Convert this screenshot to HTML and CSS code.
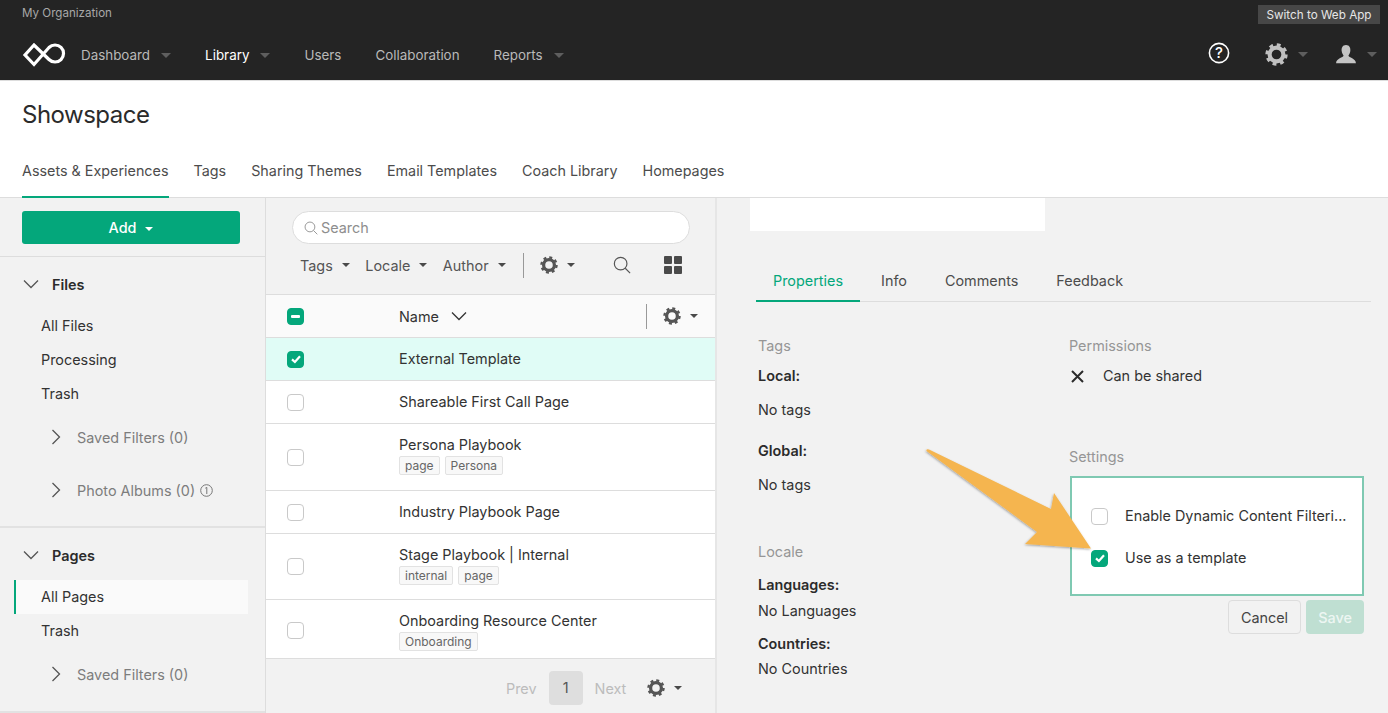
FILE: index.html
```html
<!DOCTYPE html>
<html lang="en">
<head>
    <meta charset="UTF-8">
    <title>Showspace</title>
    <link rel="stylesheet" href="styles.css">
</head>
<body>
    <svg class="defs" width="0" height="0">
        <symbol id="gear" viewBox="0 0 20 20">
            <circle cx="10" cy="10" r="6" fill="none" stroke="currentColor" stroke-width="3.6"/>
            <circle cx="10" cy="10" r="8.4" fill="none" stroke="currentColor" stroke-width="2.6" stroke-dasharray="3.3 3.3"/>
        </symbol>
        <symbol id="down" viewBox="0 0 16 10">
            <path d="M1 1.5 L8 8.5 L15 1.5" fill="none" stroke="currentColor" stroke-width="1.3"/>
        </symbol>
        <symbol id="right" viewBox="0 0 10 16">
            <path d="M1.5 1 L8.5 8 L1.5 15" fill="none" stroke="currentColor" stroke-width="1.3"/>
        </symbol>
        <symbol id="check" viewBox="0 0 12 12">
            <path d="M2 6.4 L4.9 9 L10 3.2" fill="none" stroke="#fff" stroke-width="2.2"/>
        </symbol>
        <symbol id="lens" viewBox="0 0 20 20">
            <circle cx="8.5" cy="8.5" r="7" fill="none" stroke="currentColor" stroke-width="1.3"/>
            <path d="M13.6 13.6 L19 19" stroke="currentColor" stroke-width="1.3"/>
        </symbol>
    </svg>

    <!-- Top bar -->
    <header class="topbar">
        <div class="org">My Organization</div>
        <button class="switch-btn">Switch to Web App</button>
        <nav class="topnav">
            <svg class="logo" width="44" height="24" viewBox="0 0 44 24">
                <path d="M12 2 L3 12 L12 21.500 L27 4.500 A8.500 8.500 0 1 1 27 16.500 Z" fill="none" stroke="#fff" stroke-width="3.200"/>
            </svg>
            <a class="nav-item has-caret">Dashboard</a>
            <a class="nav-item has-caret active">Library</a>
            <a class="nav-item">Users</a>
            <a class="nav-item">Collaboration</a>
            <a class="nav-item has-caret">Reports</a>
        </nav>
        <div class="top-icons">
            <svg class="help" width="22" height="22" viewBox="0 0 22 22">
                <circle cx="11" cy="11" r="9.6" fill="none" stroke="#fff" stroke-width="1.6"/>
                <text x="11" y="16" text-anchor="middle" class="help-mark">?</text>
            </svg>
            <span class="top-icon has-caret"><svg width="23" height="23"><use href="#gear"/></svg></span>
            <span class="top-icon has-caret">
                <svg width="22" height="19" viewBox="0 0 24 22">
                    <path d="M12 0 C16 0 17.5 3.500 17 7 C16.700 9.500 15.500 11 14.800 12.500 C15 14.500 23.500 15.500 23.500 21 L0.500 21 C0.500 15.500 9 14.500 9.200 12.500 C8.500 11 7.300 9.500 7 7 C6.500 3.500 8 0 12 0 Z" fill="#c4c4c4"/>
                </svg>
            </span>
        </div>
    </header>

    <!-- Page header -->
    <section class="page-head">
        <h1>Showspace</h1>
        <ul class="page-tabs">
            <li class="selected">Assets &amp; Experiences</li>
            <li>Tags</li>
            <li>Sharing Themes</li>
            <li>Email Templates</li>
            <li>Coach Library</li>
            <li>Homepages</li>
        </ul>
    </section>

    <main class="layout">
        <!-- Sidebar -->
        <aside class="sidebar">
            <div class="add-wrap">
                <button class="add-btn">Add<span class="caret white"></span></button>
            </div>
            <div class="side-group files">
                <div class="side-title"><svg width="16" height="10"><use href="#down"/></svg>Files</div>
                <a class="side-link">All Files</a>
                <a class="side-link">Processing</a>
                <a class="side-link">Trash</a>
                <a class="side-sub first"><svg width="10" height="16"><use href="#right"/></svg>Saved Filters (0)</a>
                <a class="side-sub second"><svg width="10" height="16"><use href="#right"/></svg>Photo Albums (0)
                    <svg class="info" width="13" height="13" viewBox="0 0 13 13">
                        <circle cx="6.500" cy="6.500" r="5.800" fill="none" stroke="#777" stroke-width="1"/>
                        <path d="M5.300 4.200 L6.800 3.400 L6.800 10" fill="none" stroke="#777" stroke-width="1"/>
                    </svg>
                </a>
            </div>
            <div class="side-group pages">
                <div class="side-title"><svg width="16" height="10"><use href="#down"/></svg>Pages</div>
                <a class="side-link current">All Pages</a>
                <a class="side-link">Trash</a>
                <a class="side-sub first"><svg width="10" height="16"><use href="#right"/></svg>Saved Filters (0)</a>
            </div>
        </aside>

        <!-- Asset list -->
        <section class="list-panel">
            <div class="list-tools">
                <div class="search-box"><svg width="14" height="14"><use href="#lens"/></svg>Search</div>
                <div class="filters">
                    <span class="filter">Tags<span class="caret"></span></span>
                    <span class="filter">Locale<span class="caret"></span></span>
                    <span class="filter">Author<span class="caret"></span></span>
                    <span class="vbar"></span>
                    <span class="filter gear-filter"><svg width="18" height="18"><use href="#gear"/></svg><span class="caret"></span></span>
                    <svg class="tool-lens" width="18" height="18"><use href="#lens"/></svg>
                    <svg class="tool-grid" width="18" height="18" viewBox="0 0 18 18">
                        <rect x="0" y="0" width="8" height="8" rx="1"/>
                        <rect x="10" y="0" width="8" height="8" rx="1"/>
                        <rect x="0" y="10" width="8" height="8" rx="1"/>
                        <rect x="10" y="10" width="8" height="8" rx="1"/>
                    </svg>
                </div>
            </div>
            <div class="list-row list-header">
                <span class="box on"><span class="dash"></span></span>
                <span class="name-col">Name<svg width="16" height="10"><use href="#down"/></svg></span>
                <span class="vbar"></span>
                <span class="filter gear-filter"><svg width="18" height="18"><use href="#gear"/></svg><span class="caret"></span></span>
            </div>
            <div class="list-row selected-row">
                <span class="box on"><svg width="12" height="12"><use href="#check"/></svg></span>
                <span class="name-col">External Template</span>
            </div>
            <div class="list-row">
                <span class="box"></span>
                <span class="name-col">Shareable First Call Page</span>
            </div>
            <div class="list-row tall persona">
                <span class="box"></span>
                <div class="name-col stacked">Persona Playbook
                    <div class="chips"><span class="chip">page</span><span class="chip">Persona</span></div>
                </div>
            </div>
            <div class="list-row">
                <span class="box"></span>
                <span class="name-col">Industry Playbook Page</span>
            </div>
            <div class="list-row tall">
                <span class="box"></span>
                <div class="name-col stacked">Stage Playbook | Internal
                    <div class="chips"><span class="chip">internal</span><span class="chip">page</span></div>
                </div>
            </div>
            <div class="list-row tall last">
                <span class="box"></span>
                <div class="name-col stacked">Onboarding Resource Center
                    <div class="chips"><span class="chip">Onboarding</span></div>
                </div>
            </div>
            <div class="pager">
                <span class="pager-off">Prev</span>
                <span class="pager-num">1</span>
                <span class="pager-off">Next</span>
                <span class="filter gear-filter"><svg width="18" height="18"><use href="#gear"/></svg><span class="caret"></span></span>
            </div>
        </section>

        <!-- Details -->
        <section class="detail-panel">
            <div class="preview"></div>
            <ul class="detail-tabs">
                <li class="selected">Properties</li>
                <li>Info</li>
                <li>Comments</li>
                <li>Feedback</li>
            </ul>
            <div class="detail-cols">
                <div class="detail-col">
                    <div class="muted">Tags</div>
                    <div class="strong local">Local:</div>
                    <div class="plain no-tags">No tags</div>
                    <div class="strong global">Global:</div>
                    <div class="plain no-tags">No tags</div>
                    <div class="muted locale">Locale</div>
                    <div class="strong languages">Languages:</div>
                    <div class="plain tight">No Languages</div>
                    <div class="strong countries">Countries:</div>
                    <div class="plain tight">No Countries</div>
                </div>
                <div class="detail-col right-col">
                    <div class="muted">Permissions</div>
                    <div class="perm">
                        <svg width="13" height="13" viewBox="0 0 13 13"><path d="M1 1 L12 12 M12 1 L1 12" stroke="#2b2b2b" stroke-width="2"/></svg>
                        Can be shared
                    </div>
                    <div class="muted settings">Settings</div>
                    <div class="settings-box">
                        <div class="setting"><span class="box"></span>Enable Dynamic Content Filteri...</div>
                        <div class="setting"><span class="box on"><svg width="12" height="12"><use href="#check"/></svg></span>Use as a template</div>
                    </div>
                    <div class="form-btns">
                        <button class="cancel-btn">Cancel</button>
                        <button class="save-btn">Save</button>
                    </div>
                </div>
            </div>
        </section>
    </main>

    <!-- Callout arrow drawn over the settings -->
    <svg class="callout" width="1388" height="713" viewBox="0 0 1388 713">
        <defs>
            <filter id="soft" x="-10%" y="-10%" width="120%" height="120%">
                <feDropShadow dx="-0.500" dy="1" stdDeviation="1" flood-color="#000" flood-opacity="0.35"/>
            </filter>
        </defs>
        <path d="M926.500 451 Q926 448.500 929 449.500 L1051 509 L1054 493 L1091 548.500 L1025 544 L1037 532 Z" fill="#f5b54f" filter="url(#soft)"/>
    </svg>
</body>
</html>
```
FILE: styles.css
```css
* {
    margin: 0;
    padding: 0;
    box-sizing: border-box;
    font-family: 'Inter', 'Liberation Sans', sans-serif;
}

html, body {
    height: 713px;
    overflow: hidden;
}

body {
    background-color: #f2f2f2;
    color: #333;
    font-size: 14.4px;
    position: relative;
}

.defs {
    position: absolute;
}

ul {
    list-style: none;
}

button {
    border: none;
}

/* top bar */
.topbar {
    height: 81px;
    background-color: #242424;
    border-bottom: 1px solid #ddd;
    position: relative;
    padding: 0 22px;
}

.org {
    font-size: 11.6px;
    color: #a8a8a8;
    padding-top: 6px;
    height: 28px;
}

.switch-btn {
    position: absolute;
    top: 5px;
    right: 8px;
    width: 122px;
    height: 19px;
    background-color: #474747;
    color: #e6e6e6;
    font-size: 11.7px;
}

.topnav {
    display: flex;
    align-items: center;
    height: 52px;
    position: absolute;
    top: 29px;
    left: 22px;
}

.logo {
    margin-right: 15px;
}

.nav-item {
    font-size: 13.4px;
    color: #b9b9b9;
    margin-right: 34px;
    display: flex;
    align-items: center;
}

.nav-item.active {
    color: #fff;
}

.has-caret::after {
    content: "";
    border-left: 5px solid transparent;
    border-right: 5px solid transparent;
    border-top: 5px solid #5e5e5e;
    margin-left: 11px;
}

.top-icons {
    position: absolute;
    top: 43px;
    right: 11px;
    display: flex;
    align-items: center;
    gap: 27px;
    color: #c0c0c0;
}

.top-icon {
    display: flex;
    align-items: center;
}

.top-icon svg {
    display: block;
}

.has-caret.top-icon::after {
    margin-left: 10px;
}

.help {
    margin-top: -4px;
    margin-right: 8px;
}

.help-mark {
    font-size: 15px;
    fill: #fff;
    font-weight: 500;
}

/* page title and tabs */
.page-head {
    height: 117px;
    background-color: #fff;
    border-bottom: 1px solid #ddd;
    padding: 18px 22px 0;
}

.page-head h1 {
    font-size: 24px;
    font-weight: 400;
    letter-spacing: -0.5px;
    color: #2b2b2b;
    line-height: 32px;
}

.page-tabs {
    display: flex;
    gap: 25px;
    margin-top: 24px;
}

.page-tabs li {
    height: 43px;
    line-height: 32px;
    font-size: 14.35px;
    color: #4c4c4c;
}

.page-tabs li.selected {
    border-bottom: 2px solid #04a77b;
}

/* main columns */
.layout {
    display: flex;
    height: 516px;
    overflow: hidden;
}

.sidebar {
    width: 266px;
    border-right: 1px solid #ddd;
    flex-shrink: 0;
}

.add-wrap {
    height: 59px;
    padding: 13px 25px 0 22px;
    border-bottom: 1px solid #ddd;
}

.add-btn {
    width: 218px;
    height: 33px;
    background-color: #04a77b;
    color: #fff;
    border-radius: 3px;
    font-size: 14.4px;
    font-weight: 500;
}

.caret {
    display: inline-block;
    border-left: 4px solid transparent;
    border-right: 4px solid transparent;
    border-top: 4px solid #4a4a4a;
    margin-left: 9px;
    vertical-align: middle;
}

.caret.white {
    border-top-color: #fff;
}

.side-group {
    border-bottom: 2px solid #e2e2e2;
    padding-top: 13px;
}

.files {
    height: 271px;
}

.pages {
    height: 185px;
}

.side-title {
    display: flex;
    align-items: center;
    height: 28px;
    margin-bottom: 11px;
    padding-left: 23px;
    font-weight: 600;
    color: #2b2b2b;
    gap: 13px;
}

.side-title svg {
    color: #555;
}

.side-link {
    display: block;
    height: 34px;
    line-height: 34px;
    padding-left: 41px;
    color: #333;
}

.side-link.current {
    margin-left: 14px;
    margin-right: 17px;
    padding-left: 25px;
    background-color: #fafafa;
    border-left: 2px solid #04a77b;
}

.side-sub {
    display: flex;
    align-items: center;
    gap: 16px;
    padding-left: 51px;
    height: 34px;
    color: #7d7d7d;
}

.side-sub svg {
    color: #555;
}

.side-sub.first {
    margin-top: 9px;
}

.side-sub.second {
    margin-top: 19px;
}

.side-sub .info {
    margin-left: -11px;
}

/* asset list */
.list-panel {
    width: 451px;
    border-right: 2px solid #e6e6e6;
    flex-shrink: 0;
}

.list-tools {
    height: 97px;
    padding: 13px 26px 0 26px;
    border-bottom: 1px solid #ddd;
}

.search-box {
    height: 33px;
    width: 398px;
    background-color: #fff;
    border: 1px solid #ddd;
    border-radius: 17px;
    padding-left: 11px;
    display: flex;
    align-items: center;
    gap: 3px;
    color: #8e8e8e;
}

.filters {
    display: flex;
    align-items: center;
    height: 34px;
    margin-top: 4px;
    padding-left: 8px;
    color: #555;
}

.filter {
    display: flex;
    align-items: center;
    margin-right: 15.500px;
    color: #555;
}

.vbar {
    width: 1px;
    height: 25px;
    background-color: #999;
    margin-right: 16px;
    margin-left: 2px;
}

.gear-filter svg {
    display: block;
}

.tool-lens {
    margin-left: 22px;
    color: #555;
}

.tool-grid {
    margin-left: 33px;
    fill: #4a4a4a;
}

.list-row {
    display: flex;
    align-items: center;
    height: 43px;
    padding-left: 21px;
    background-color: #fff;
    border-bottom: 1px solid #ddd;
}

.list-row.tall {
    height: 66px;
}

.list-row.persona {
    height: 67px;
}

.list-row.last {
    height: 59px;
    padding-top: 7px;
}

.list-row.last .box {
    margin-top: -4px;
}

.list-header {
    background-color: #fafafa;
}

.list-header .vbar {
    margin-left: 16px;
    margin-right: 16px;
}

.list-header .filter {
    margin-right: 0;
}

.selected-row {
    background-color: #e0fcf6;
}

.box {
    width: 17px;
    height: 17px;
    border: 1px solid #c9c9c9;
    border-radius: 4px;
    background-color: #fff;
    flex-shrink: 0;
    display: flex;
    align-items: center;
    justify-content: center;
}

.box.on {
    background-color: #04a77b;
    border-color: #04a77b;
}

.dash {
    width: 9px;
    height: 3px;
    background-color: #fff;
    border-radius: 1px;
}

.name-col {
    margin-left: 95px;
    padding-bottom: 2px;
    color: #333;
    display: flex;
    align-items: center;
    gap: 12px;
}

.list-header .name-col {
    width: 231px;
    flex-shrink: 0;
    padding-bottom: 0;
}

.name-col.stacked {
    display: block;
    padding-bottom: 3px;
}

.chips {
    display: flex;
    gap: 5px;
    margin-top: 3px;
}

.chip {
    font-size: 12px;
    line-height: 17px;
    padding: 0 5px;
    background-color: #f8f8f8;
    border: 1px solid #e2e2e2;
    border-radius: 2px;
    color: #666;
}

.pager {
    display: flex;
    align-items: center;
    height: 54px;
    padding: 4px 0 0 240px;
    color: #555;
}

.pager-off {
    color: #bcbcbc;
}

.pager-num {
    width: 34px;
    height: 34px;
    line-height: 34px;
    text-align: center;
    background-color: #dedede;
    border-radius: 4px;
    margin: 0 12px;
    color: #555;
}

.pager .filter {
    margin-left: 21px;
}

/* details */
.detail-panel {
    flex: 1;
    padding-left: 32px;
    position: relative;
}

.preview {
    width: 295px;
    height: 33px;
    background-color: #fff;
    margin-left: 1px;
}

.detail-tabs {
    display: flex;
    width: 615px;
    margin: 33px 0 0 7px;
    height: 38px;
    border-bottom: 1px solid #ddd;
    gap: 4px;
}

.detail-tabs li {
    padding: 0 17px;
    height: 38px;
    line-height: 34px;
    color: #4c4c4c;
}

.detail-tabs li.selected {
    color: #04a77b;
    border-bottom: 2px solid #04a77b;
}

.detail-cols {
    display: flex;
    padding: 33px 0 0 9px;
}

.detail-col {
    width: 311px;
    line-height: 22px;
    color: #333;
}

.muted {
    color: #969696;
}

.strong {
    font-weight: 600;
    color: #2b2b2b;
}

.local {
    margin-top: 8px;
}

.no-tags {
    margin-top: 12px;
}

.global {
    margin-top: 19px;
}

.locale {
    margin-top: 45px;
}

.languages {
    margin-top: 11px;
}

.tight {
    margin-top: 4px;
}

.plain.tight:last-child {
    margin-top: 3px;
}

.countries {
    margin-top: 11px;
}

.perm {
    display: flex;
    align-items: center;
    gap: 19px;
    margin-top: 8px;
    padding-left: 2px;
}

.settings {
    margin-top: 59px;
}

.settings-box {
    width: 294px;
    height: 120px;
    margin: 8px 0 0 1px;
    background-color: #fff;
    border: 2px solid #7fc9b2;
    padding: 17px 20px 0 19px;
}

.setting {
    display: flex;
    align-items: center;
    gap: 17px;
    height: 42px;
    white-space: nowrap;
}

.form-btns {
    display: flex;
    justify-content: flex-end;
    gap: 5px;
    width: 295px;
    margin-top: 4px;
}

.form-btns button {
    height: 34px;
    border-radius: 4px;
    font-size: 14.4px;
}

.cancel-btn {
    width: 73px;
    background-color: #f2f2f2;
    border: 1px solid #ddd;
    color: #444;
}

.save-btn {
    width: 58px;
    background-color: #bfdfd2;
    color: #edf6f2;
    font-weight: 500;
}

.callout {
    position: absolute;
    top: 0;
    left: 0;
    pointer-events: none;
}
```
